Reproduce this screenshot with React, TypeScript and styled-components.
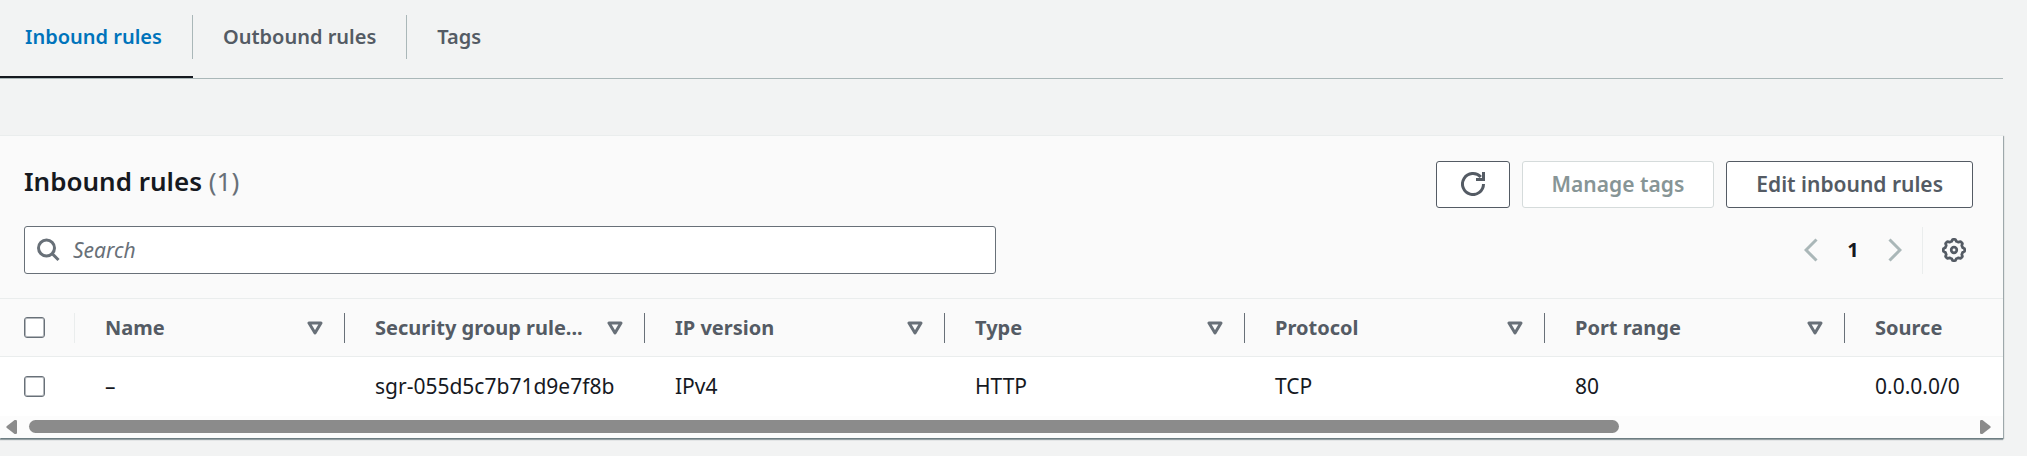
import React from 'react';
import styled, { createGlobalStyle } from 'styled-components';

const GlobalStyle = createGlobalStyle`
  *, *::before, *::after { box-sizing: border-box; }
  body {
    margin: 0;
    background: #f2f3f3;
    color: #16191f;
    font-family: 'Noto Sans', 'Open Sans', sans-serif;
    font-size: 20px;
    line-height: 30px;
  }
  button, input { font: inherit; color: inherit; }
`;

const Page = styled.main`
  padding: 0 24px 16px 0;
`;

const TabBar = styled.nav`
  display: flex;
  height: 79px;
  margin-bottom: 56px;
  border-bottom: 1px solid #aab7b8;
`;

const Tab = styled.button<{ $active?: boolean }>`
  display: flex;
  align-items: flex-start;
  padding: 15px 0 0;
  border: 0;
  border-bottom: 2px solid ${(p) => (p.$active ? '#16191f' : 'transparent')};
  background: none;
  color: ${(p) => (p.$active ? '#0073bb' : '#545b64')};
  font-weight: 600;
  cursor: pointer;
`;

const TabLabel = styled.span<{ $divided?: boolean }>`
  height: 44px;
  padding: 7px 30px 0;
  line-height: 30px;
  border-right: 1px solid ${(p) => (p.$divided ? '#aab7b8' : 'transparent')};
  ${Tab}:first-child & { padding-left: 25px; }
`;

const Panel = styled.section`
  border-top: 1px solid #eaeded;
  background: #fafafa;
  box-shadow: 1px 1px 1px 0 rgba(0, 28, 36, 0.3), 0 2px 1px 0 rgba(0, 28, 36, 0.35);
`;

const PanelHeader = styled.header`
  display: flex;
  flex-direction: column;
  gap: 18px;
  padding: 25px 30px 24px 24px;
`;

const HeaderRow = styled.div`
  display: flex;
  justify-content: space-between;
  gap: 24px;
`;

const Title = styled.h2`
  margin: 0;
  font-size: 26px;
  line-height: 40px;
  font-weight: 600;
`;

const Count = styled.span`
  color: #687078;
  font-weight: 400;
`;

const Actions = styled.div`
  display: flex;
  gap: 12px;
`;

const ActionButton = styled.button`
  display: flex;
  align-items: center;
  justify-content: center;
  height: 47px;
  padding: 0 29px 2px;
  border: 1px solid #545b64;
  border-radius: 3px;
  background: #fff;
  color: #545b64;
  font-size: 21px;
  font-weight: 600;
  white-space: nowrap;
  cursor: pointer;
  &:disabled {
    border-color: #d5dbdb;
    color: #879596;
    cursor: default;
  }
`;

const IconButton = styled(ActionButton)`
  padding: 0 24px 1px;
`;

const SearchBox = styled.label`
  display: flex;
  align-items: center;
  flex: 0 1 972px;
  gap: 13px;
  height: 48px;
  padding: 0 11px;
  border: 1px solid #687078;
  border-radius: 3px;
  background: #fff;
  color: #687078;
`;

const SearchInput = styled.input`
  flex: 1;
  min-width: 0;
  padding: 0;
  border: 0;
  outline: 0;
  background: none;
  font-size: 21px;
  &::placeholder {
    color: #687078;
    font-style: italic;
    opacity: 1;
  }
`;

const Tools = styled.div`
  display: flex;
  align-items: center;
`;

const PlainButton = styled.button`
  display: flex;
  padding: 0 7px;
  border: 0;
  background: none;
  color: #545b64;
  cursor: pointer;
  &:disabled { color: #aab7b8; }
`;

const PageNumber = styled.button`
  width: 56px;
  padding: 0;
  border: 0;
  background: none;
  color: #16191f;
  font-weight: 700;
  text-align: center;
`;

const Divider = styled.span`
  height: 47px;
  margin: 0 12px 0 13px;
  border-left: 1px solid #eaeded;
`;

const TableClip = styled.div`
  overflow: hidden;
  background: #fff;
`;

const Table = styled.table`
  table-layout: fixed;
  width: 2145px;
  border-collapse: separate;
  border-spacing: 0;
`;

const CheckColumn = styled.col`
  width: 75px;
`;

const NameColumn = styled.col`
  width: 270px;
`;

const DataColumn = styled.col`
  width: 300px;
`;

const HeadCell = styled.th`
  height: 59px;
  padding: 0;
  border-top: 1px solid #eaeded;
  border-bottom: 1px solid #eaeded;
  background: #fafafa;
  color: #545b64;
  font-weight: 700;
  text-align: left;
`;

const HeadContent = styled.div<{ $faint?: boolean }>`
  display: flex;
  align-items: center;
  justify-content: space-between;
  height: 30px;
  padding: 0 21px 0 30px;
  border-right: 1px solid ${(p) => (p.$faint ? '#eaeded' : '#687078')};
  white-space: nowrap;
`;

const CheckHead = styled(HeadContent)`
  padding: 0 0 0 24px;
`;

const SortButton = styled.button`
  display: flex;
  padding: 0;
  border: 0;
  background: none;
  color: #687078;
`;

const Cell = styled.td`
  height: 59px;
  padding: 0 0 1px 30px;
  font-size: 21px;
  white-space: nowrap;
`;

const CheckCell = styled(Cell)`
  padding: 0 0 0 24px;
`;

const Checkbox = styled.input`
  display: block;
  appearance: none;
  width: 21px;
  height: 21px;
  margin: 0;
  border: 1px solid #687078;
  border-radius: 3px;
  background: #fff;
  box-shadow: inset 0 0 0 1px #b4b8bc;
  &:checked { background: #0073bb; }
`;

const ScrollTrack = styled.div`
  display: flex;
  align-items: center;
  gap: 11px;
  height: 22px;
  padding: 0 12px 1px 6px;
  background: #fcfcfc;
  color: #8b8b8b;
`;

const ScrollLane = styled.div`
  flex: 1;
`;

const ScrollThumb = styled.div`
  width: 82%;
  height: 13px;
  border-radius: 7px;
  background: #8b8b8b;
`;

const SortIcon = () => (
  <svg width="16" height="14" viewBox="0 0 16 14" fill="none" stroke="currentColor" strokeWidth="3" strokeLinejoin="round" aria-hidden="true">
    <path d="M2 2h12L8 12z" />
  </svg>
);

const Arrow = ({ flip }: { flip?: boolean }) => (
  <svg width="12" height="14" viewBox="0 0 12 14" fill="currentColor" aria-hidden="true">
    <path d={flip ? 'M1 1.2Q1 0 2.2 0H3.4L11.4 6.2Q12 7 11.4 7.8L3.4 14H2.2Q1 14 1 12.8z' : 'M11 1.2Q11 0 9.8 0H8.6L.6 6.2Q0 7 .6 7.8L8.6 14H9.8Q11 14 11 12.8z'} />
  </svg>
);

const Chevron = ({ right }: { right?: boolean }) => (
  <svg width="14" height="24" viewBox="0 0 14 24" fill="none" stroke="currentColor" strokeWidth="3" aria-hidden="true">
    <path d={right ? 'M1.5 1.5L12 12L1.5 22.5' : 'M12.5 1.5L2 12L12.5 22.5'} />
  </svg>
);

const columns = ['Name', 'Security group rule...', 'IP version', 'Type', 'Protocol', 'Port range', 'Source'];
const rule = ['–', 'sgr-055d5c7b71d9e7f8b', 'IPv4', 'HTTP', 'TCP', '80', '0.0.0.0/0'];

/* Outline of an eight-toothed cog centred in a 24px box. */
const cog = Array.from({ length: 96 }, (_, i) => {
  const angle = (i / 96) * Math.PI * 2;
  const radius = 9.8 + 0.9 * Math.tanh(3 * Math.cos(angle * 8));
  return `${(12 + radius * Math.sin(angle)).toFixed(2)},${(12 - radius * Math.cos(angle)).toFixed(2)}`;
}).join(' ');

export default function App() {
  return (
    <>
      <GlobalStyle />
      <Page>
        <TabBar role="tablist">
          <Tab $active role="tab" aria-selected="true"><TabLabel $divided>Inbound rules</TabLabel></Tab>
          <Tab role="tab"><TabLabel $divided>Outbound rules</TabLabel></Tab>
          <Tab role="tab"><TabLabel>Tags</TabLabel></Tab>
        </TabBar>
        <Panel>
          <PanelHeader>
            <HeaderRow>
              <Title>Inbound rules <Count>(1)</Count></Title>
              <Actions>
                <IconButton aria-label="Refresh">
                  <svg width="24" height="24" viewBox="0 0 24 24" fill="none" stroke="currentColor" strokeWidth="3" aria-hidden="true">
                    <path d="M22.5 12A10.5 10.5 0 1 1 19.8 5" />
                    <path d="M22.5 0v7.5H15" />
                  </svg>
                </IconButton>
                <ActionButton disabled>Manage tags</ActionButton>
                <ActionButton>Edit inbound rules</ActionButton>
              </Actions>
            </HeaderRow>
            <HeaderRow>
              <SearchBox>
                <svg width="24" height="24" viewBox="0 0 24 24" fill="none" stroke="currentColor" strokeWidth="3" aria-hidden="true">
                  <circle cx="10.5" cy="10" r="8" />
                  <path d="M16 15.5L22.5 22" />
                </svg>
                <SearchInput type="text" placeholder="Search" aria-label="Search" />
              </SearchBox>
              <Tools>
                <PlainButton disabled aria-label="Previous page"><Chevron /></PlainButton>
                <PageNumber aria-current="page">1</PageNumber>
                <PlainButton disabled aria-label="Next page"><Chevron right /></PlainButton>
                <Divider />
                <PlainButton aria-label="Preferences">
                  <svg width="24" height="24" viewBox="0 0 24 24" fill="none" stroke="currentColor" strokeWidth="2.7" aria-hidden="true">
                    <polygon points={cog} strokeLinejoin="round" />
                    <circle cx="12" cy="12" r="2.8" />
                  </svg>
                </PlainButton>
              </Tools>
            </HeaderRow>
          </PanelHeader>
          <TableClip>
            <Table>
              <colgroup>
                <CheckColumn />
                <NameColumn />
                {columns.slice(1).map((name) => <DataColumn key={name} />)}
              </colgroup>
              <thead>
                <tr>
                  <HeadCell><CheckHead $faint><Checkbox type="checkbox" aria-label="Select all rules" /></CheckHead></HeadCell>
                  {columns.map((name) => (
                    <HeadCell key={name} scope="col">
                      <HeadContent>
                        {name}
                        <SortButton aria-label={`Sort by ${name}`}><SortIcon /></SortButton>
                      </HeadContent>
                    </HeadCell>
                  ))}
                </tr>
              </thead>
              <tbody>
                <tr>
                  <CheckCell><Checkbox type="checkbox" aria-label="Select rule" /></CheckCell>
                  {rule.map((value) => <Cell key={value}>{value}</Cell>)}
                </tr>
              </tbody>
            </Table>
          </TableClip>
          <ScrollTrack>
            <Arrow />
            <ScrollLane><ScrollThumb /></ScrollLane>
            <Arrow flip />
          </ScrollTrack>
        </Panel>
      </Page>
    </>
  );
}
